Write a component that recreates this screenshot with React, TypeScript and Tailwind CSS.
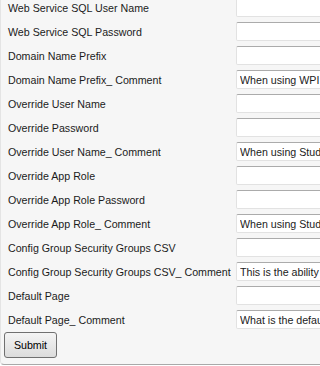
import React from "react";

const rows: { label: string; value: string }[] = [
  { label: "Web Service SQL User Name", value: "" },
  { label: "Web Service SQL Password", value: "" },
  { label: "Domain Name Prefix", value: "" },
  { label: "Domain Name Prefix_ Comment", value: "When using WPI authentication" },
  { label: "Override User Name", value: "" },
  { label: "Override Password", value: "" },
  { label: "Override User Name_ Comment", value: "When using Studio" },
  { label: "Override App Role", value: "" },
  { label: "Override App Role Password", value: "" },
  { label: "Override App Role_ Comment", value: "When using Studio" },
  { label: "Config Group Security Groups CSV", value: "" },
  { label: "Config Group Security Groups CSV_ Comment", value: "This is the ability to" },
  { label: "Default Page", value: "" },
  { label: "Default Page_ Comment", value: "What is the default page" },
];

export default function App() {
  return (
    <div
      className="w-[320px] h-[366px] overflow-hidden bg-white text-[10.67px] text-[#1b1b1b]"
      style={{ fontFamily: '"Liberation Sans", Arial, sans-serif' }}
    >
      <div className="h-[365px] bg-[#f6f6f6] border-b border-b-[#a9a9a9] border-l border-l-[#e4e4e4] rounded-bl-[4px] overflow-hidden">
        <div className="mt-[-4px] flex flex-col">
          {rows.map((r) => (
            <div key={r.label} className="h-[24px] flex items-center">
              <div className="w-[228px] shrink-0 pl-[7px] whitespace-nowrap leading-none">
                {r.label}
              </div>
              <input
                readOnly
                defaultValue={r.value}
                className="ml-[7px] mb-[1px] shrink-0 w-[220px] h-[19px] bg-white rounded-[2px] border border-[#e2e2e2] border-t-[#ababab] px-[3px] text-[10.67px] text-[#1b1b1b] outline-none"
                style={{ fontFamily: '"Liberation Sans", Arial, sans-serif' }}
              />
            </div>
          ))}
        </div>
        <div className="pl-[3px]">
          <button className="w-[53px] h-[26px] rounded-[3px] border border-[#707070] bg-gradient-to-b from-[#f4f4f4] to-[#dcdcdc] text-[10.67px] text-black leading-none">
            Submit
          </button>
        </div>
      </div>
    </div>
  );
}
